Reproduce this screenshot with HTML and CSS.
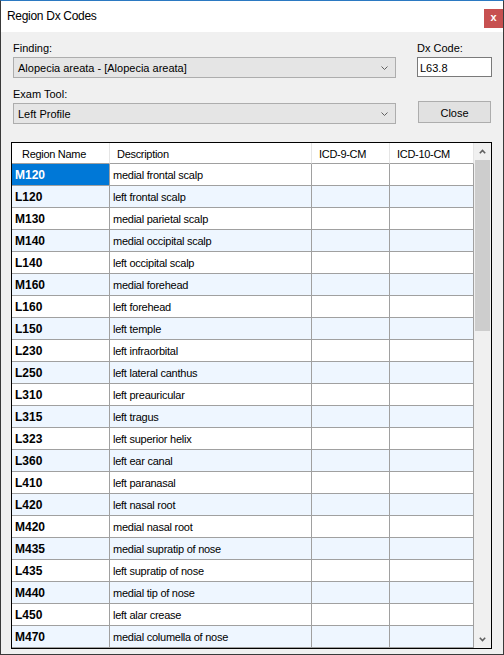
FILE: index.html
```html
<!DOCTYPE html>
<html lang="en">
<head>
    <meta charset="UTF-8">
    <title>Region Dx Codes</title>
    <link rel="stylesheet" href="styles.css">
</head>
<body>
    <div class="window">
        <div class="titlebar">
            <span class="title">Region Dx Codes</span>
            <span class="close-x">x</span>
        </div>
        <div class="body">
            <div class="form-row">
                <div class="field wide">
                    <label>Finding:</label>
                    <div class="combo">
                        <span>Alopecia areata - [Alopecia areata]</span>
                        <svg width="7" height="4" viewBox="0 0 7 4"><polyline points="0.5,0.5 3.5,3.5 6.5,0.5" fill="none" stroke="#606060" stroke-width="1"/></svg>
                    </div>
                </div>
                <div class="field code">
                    <label>Dx Code:</label>
                    <div class="textbox">L63.8</div>
                </div>
            </div>
            <div class="form-row second">
                <div class="field wide">
                    <label>Exam Tool:</label>
                    <div class="combo">
                        <span>Left Profile</span>
                        <svg width="7" height="4" viewBox="0 0 7 4"><polyline points="0.5,0.5 3.5,3.5 6.5,0.5" fill="none" stroke="#606060" stroke-width="1"/></svg>
                    </div>
                </div>
                <button class="btn">Close</button>
            </div>

            <div class="grid">
                <div class="grid-main">
                    <div class="grid-head">
                        <div class="hcell first">Region Name</div>
                        <div class="hcell">Description</div>
                        <div class="hcell">ICD-9-CM</div>
                        <div class="hcell">ICD-10-CM</div>
                    </div>
                    <div class="grid-rows">
                        <div class="row"><div class="cell code-cell selected">M120</div><div class="cell">medial frontal scalp</div><div class="cell"></div><div class="cell"></div></div>
                        <div class="row"><div class="cell code-cell">L120</div><div class="cell">left frontal scalp</div><div class="cell"></div><div class="cell"></div></div>
                        <div class="row"><div class="cell code-cell">M130</div><div class="cell">medial parietal scalp</div><div class="cell"></div><div class="cell"></div></div>
                        <div class="row"><div class="cell code-cell">M140</div><div class="cell">medial occipital scalp</div><div class="cell"></div><div class="cell"></div></div>
                        <div class="row"><div class="cell code-cell">L140</div><div class="cell">left occipital scalp</div><div class="cell"></div><div class="cell"></div></div>
                        <div class="row"><div class="cell code-cell">M160</div><div class="cell">medial forehead</div><div class="cell"></div><div class="cell"></div></div>
                        <div class="row"><div class="cell code-cell">L160</div><div class="cell">left forehead</div><div class="cell"></div><div class="cell"></div></div>
                        <div class="row"><div class="cell code-cell">L150</div><div class="cell">left temple</div><div class="cell"></div><div class="cell"></div></div>
                        <div class="row"><div class="cell code-cell">L230</div><div class="cell">left infraorbital</div><div class="cell"></div><div class="cell"></div></div>
                        <div class="row"><div class="cell code-cell">L250</div><div class="cell">left lateral canthus</div><div class="cell"></div><div class="cell"></div></div>
                        <div class="row"><div class="cell code-cell">L310</div><div class="cell">left preauricular</div><div class="cell"></div><div class="cell"></div></div>
                        <div class="row"><div class="cell code-cell">L315</div><div class="cell">left tragus</div><div class="cell"></div><div class="cell"></div></div>
                        <div class="row"><div class="cell code-cell">L323</div><div class="cell">left superior helix</div><div class="cell"></div><div class="cell"></div></div>
                        <div class="row"><div class="cell code-cell">L360</div><div class="cell">left ear canal</div><div class="cell"></div><div class="cell"></div></div>
                        <div class="row"><div class="cell code-cell">L410</div><div class="cell">left paranasal</div><div class="cell"></div><div class="cell"></div></div>
                        <div class="row"><div class="cell code-cell">L420</div><div class="cell">left nasal root</div><div class="cell"></div><div class="cell"></div></div>
                        <div class="row"><div class="cell code-cell">M420</div><div class="cell">medial nasal root</div><div class="cell"></div><div class="cell"></div></div>
                        <div class="row"><div class="cell code-cell">M435</div><div class="cell">medial supratip of nose</div><div class="cell"></div><div class="cell"></div></div>
                        <div class="row"><div class="cell code-cell">L435</div><div class="cell">left supratip of nose</div><div class="cell"></div><div class="cell"></div></div>
                        <div class="row"><div class="cell code-cell">M440</div><div class="cell">medial tip of nose</div><div class="cell"></div><div class="cell"></div></div>
                        <div class="row"><div class="cell code-cell">L450</div><div class="cell">left alar crease</div><div class="cell"></div><div class="cell"></div></div>
                        <div class="row"><div class="cell code-cell">M470</div><div class="cell">medial columella of nose</div><div class="cell"></div><div class="cell"></div></div>
                    </div>
                </div>
                <div class="scrollbar">
                    <div class="arrow">
                        <svg width="7" height="5" viewBox="0 0 7 5"><polyline points="0.8,4.2 3.5,1.5 6.2,4.2" fill="none" stroke="#606060" stroke-width="1.6"/></svg>
                    </div>
                    <div class="thumb"></div>
                    <div class="track"></div>
                    <div class="arrow">
                        <svg width="7" height="5" viewBox="0 0 7 5"><polyline points="0.8,0.8 3.5,3.5 6.2,0.8" fill="none" stroke="#606060" stroke-width="1.6"/></svg>
                    </div>
                </div>
            </div>
        </div>
    </div>
</body>
</html>
```

FILE: styles.css
```css
* {
    margin: 0;
    padding: 0;
    box-sizing: border-box;
}

body {
    font-family: "Liberation Sans", Arial, sans-serif;
    font-size: 11px;
    color: #000;
    background: #f0f0f0;
}

.window {
    width: 504px;
    height: 655px;
    border: 1px solid #3a3a3a;
    border-top-color: #2b79c2;
    background: #f0f0f0;
    display: flex;
    flex-direction: column;
}

.titlebar {
    height: 31px;
    flex-shrink: 0;
    background: #fff;
    display: flex;
    justify-content: space-between;
    align-items: flex-start;
}

.title {
    font-size: 12px;
    letter-spacing: -0.3px;
    line-height: 15px;
    padding: 8px 0 0 6px;
}

.close-x {
    width: 19px;
    height: 19px;
    margin-top: 8px;
    background: #c75050;
    color: #fff;
    font-weight: bold;
    font-size: 11px;
    line-height: 16px;
    text-align: center;
}

.body {
    padding: 10px 0 0 12px;
}

.form-row {
    display: flex;
    align-items: flex-start;
}

.form-row.second {
    margin-top: 10px;
}

.field label {
    display: block;
    height: 13px;
    line-height: 13px;
    margin-bottom: 2px;
}

.field.wide {
    width: 383px;
}

.field.code {
    width: 75px;
    margin-left: 21px;
}

.combo {
    height: 21px;
    border: 1px solid #adadad;
    background: #e5e5e5;
    display: flex;
    align-items: center;
    justify-content: space-between;
    padding: 1px 7px 0 4px;
    line-height: 18px;
}

.combo svg {
    display: block;
    margin-top: -1px;
}

.textbox {
    margin-top: 1px;
    height: 20px;
    border: 1px solid #7a7a7a;
    background: #fff;
    padding: 1px 0 0 2px;
    line-height: 18px;
}

.btn {
    width: 73px;
    height: 22px;
    margin: 13px 0 0 22px;
    padding-top: 1px;
    border: 1px solid #adadad;
    background: #e1e1e1;
    font-family: inherit;
    font-size: 11px;
    color: #000;
}

/* data grid */
.grid {
    margin: 18px 0 0 -2px;
    width: 481px;
    height: 507px;
    border: 1px solid #000;
    background: #fff;
    display: flex;
}

.grid-main {
    width: 462px;
}

.grid-head,
.row {
    display: grid;
    grid-template-columns: 98px 202px 78px 84px;
}

.hcell {
    height: 21px;
    line-height: 20px;
    padding: 1px 0 0 7px;
    border-right: 1px solid #e5e5e5;
    border-bottom: 1px solid #a0a0a0;
    letter-spacing: -0.3px;
    white-space: nowrap;
    overflow: hidden;
}

.hcell.first {
    padding-left: 10px;
}

.cell {
    height: 22px;
    line-height: 21px;
    padding: 1px 0 0 3px;
    border-right: 1px solid #a0a0a0;
    border-bottom: 1px solid #a0a0a0;
    letter-spacing: -0.25px;
    white-space: nowrap;
    overflow: hidden;
}

.row:nth-child(even) .cell {
    background: #eef6ff;
}

.cell.code-cell {
    font-weight: bold;
    font-size: 12px;
    letter-spacing: 0;
}

.cell.selected {
    background: #0078d7;
    color: #fff;
}

.scrollbar {
    width: 17px;
    background: #f0f0f0;
    display: flex;
    flex-direction: column;
}

.arrow {
    height: 17px;
    display: flex;
    align-items: center;
    justify-content: center;
}

.arrow svg {
    display: block;
}

.thumb {
    height: 171px;
    margin: 0 1px;
    background: #cdcdcd;
}

.track {
    flex: 1;
}
```
